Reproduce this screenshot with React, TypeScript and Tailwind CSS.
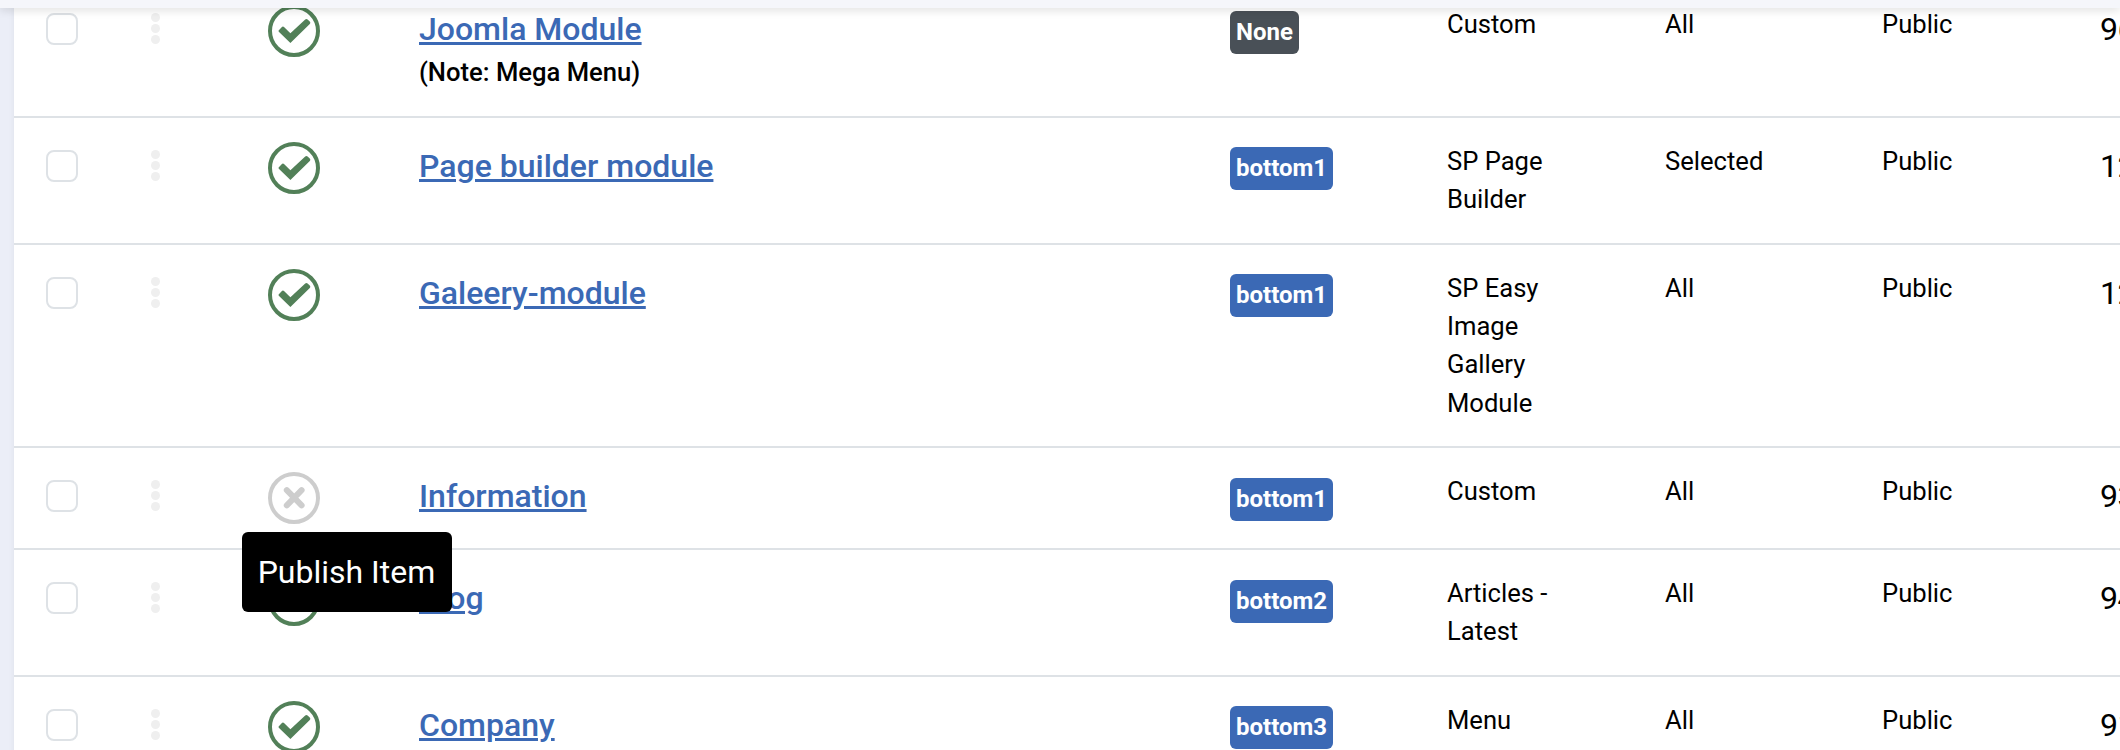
type Row = {
  title: string;
  note?: string;
  published: boolean;
  position: string;
  type: string[];
  pages: string;
  id: string;
  height: string;
  badgeTop: string;
};

const rows: Row[] = [
  { title: "Joomla Module", note: "(Note: Mega Menu)", published: true, position: "None", type: ["Custom"], pages: "All", id: "96", height: "h-[137px]", badgeTop: "pt-[30px]" },
  { title: "Page builder module", published: true, position: "bottom1", type: ["SP Page", "Builder"], pages: "Selected", id: "123", height: "h-[127px]", badgeTop: "pt-[29px]" },
  { title: "Galeery-module", published: true, position: "bottom1", type: ["SP Easy", "Image", "Gallery", "Module"], pages: "All", id: "122", height: "h-[203px]", badgeTop: "pt-[29px]" },
  { title: "Information", published: false, position: "bottom1", type: ["Custom"], pages: "All", id: "93", height: "h-[102px]", badgeTop: "pt-[30px]" },
  { title: "Blog", published: true, position: "bottom2", type: ["Articles -", "Latest"], pages: "All", id: "94", height: "h-[127px]", badgeTop: "pt-[30px]" },
  { title: "Company", published: true, position: "bottom3", type: ["Menu"], pages: "All", id: "91", height: "h-[127px]", badgeTop: "pt-[29px]" },
];

function StateIcon({ published }: { published: boolean }) {
  return (
    <svg width="52" height="52" viewBox="0 0 52 52" fill="none" className={published ? "text-[#528058]" : "text-[#cdcdcd]"}>
      <circle cx="26" cy="26" r="24" stroke="currentColor" strokeWidth="4" />
      {published ? (
        <path d="M10.8 25.2 L14.2 21.8 Q15.2 21.2 16 22 L22.4 28.2 L37.2 14.4 Q38.4 13.4 39.6 14.4 L42 16.8 Q42.8 18 41.8 19 L22.4 38 L10.8 26.8 Q10.2 26 10.8 25.2Z" fill="currentColor" />
      ) : (
        <path d="M18.8 18.2 L33.6 33.4 M33.6 18.2 L18.8 33.4" stroke="currentColor" strokeWidth="6" strokeLinecap="round" />
      )}
    </svg>
  );
}

function ModuleRow({ row }: { row: Row }) {
  return (
    <div className={`grid shrink-0 grid-cols-[32px_106px_148px_811px_217px_218px_217px_218px_100px] border-b-2 border-[#dee2e6] pl-8 text-[25.6px] leading-[38.4px] ${row.height}`}>
      <div className="pt-8">
        <div className="size-8 rounded-lg border-2 border-[#dee2e6] bg-white" />
      </div>
      <div className="flex flex-col items-end gap-[2px] pt-[31.5px] pr-[24px]">
        <i className="size-[9px] rounded-full bg-[#efefef]" />
        <i className="size-[9px] rounded-full bg-[#efefef]" />
        <i className="size-[9px] rounded-full bg-[#efefef]" />
      </div>
      <div className="flex justify-end pt-6 pr-[12px]">
        <StateIcon published={row.published} />
      </div>
      <div className="pt-[24px] pl-[87px]">
        <a className="block text-[32px] leading-[48px] font-medium text-[#3b69b5] underline decoration-[3px] underline-offset-[2px]">{row.title}</a>
        {row.note && <div className="font-medium">{row.note}</div>}
      </div>
      <div className={row.badgeTop + " pl-[87px]"}>
        <span className={`inline-block h-[43px] rounded-md px-[6px] text-2xl leading-[42px] font-bold text-white ${row.position === "None" ? "bg-[#495057]" : "bg-[#3b69b5]"}`}>
          {row.position}
        </span>
      </div>
      <div className="pt-[23.8px] pl-[87px] leading-[38.25px] whitespace-nowrap">
        {row.type.map((line) => (
          <div key={line}>{line}</div>
        ))}
      </div>
      <div className="pt-6 pl-[87px]">{row.pages}</div>
      <div className="pt-6 pl-[87px]">Public</div>
      <div className="pt-[24px] pl-[87px] text-[32px] leading-[48px] tracking-[-0.6px]">{row.id}</div>
    </div>
  );
}

export default function App() {
  return (
    <div className="relative flex h-[750px] w-[2120px] flex-col overflow-hidden bg-[#ebeef7] font-[Roboto,sans-serif] text-black">
      <div className="z-10 h-2 shrink-0 bg-[#f5f6fb] shadow-[0_2px_10px_rgba(0,0,0,0.14)]" />
      <div className="-mt-[27px] ml-[14px] flex w-[2106px] flex-col bg-white shadow-[0_0_6px_rgba(0,0,0,0.06)]">
        {rows.map((row) => (
          <ModuleRow key={row.title} row={row} />
        ))}
      </div>
      <div role="tooltip" className="absolute top-[532px] left-[242px] flex h-[80px] w-[210px] items-center justify-center rounded-md bg-black pr-px text-[32px] text-white">
        Publish Item
      </div>
    </div>
  );
}
